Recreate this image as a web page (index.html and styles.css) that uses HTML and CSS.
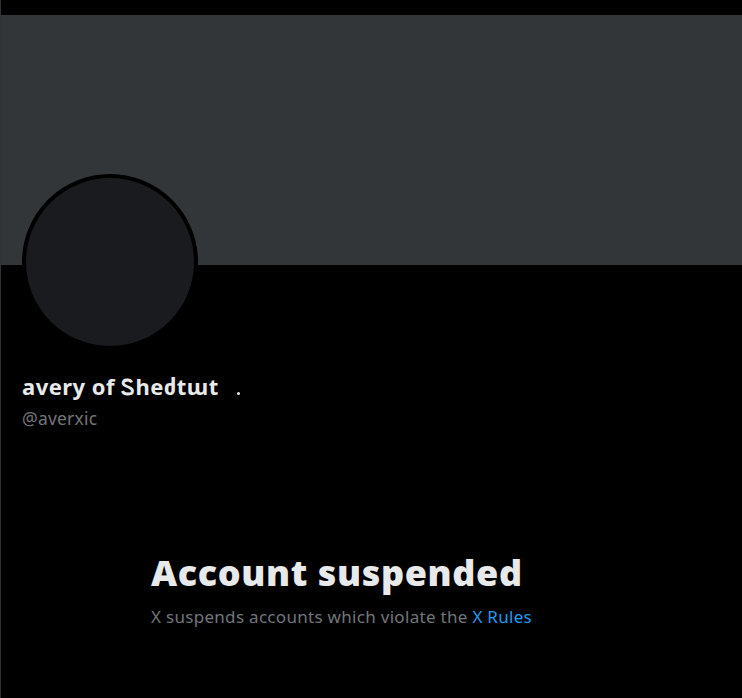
FILE: index.html
```html
<!DOCTYPE html>
<html lang="en">
<head>
<meta charset="utf-8">
<title>Account suspended</title>
<link rel="stylesheet" href="styles.css">
</head>
<body>
<main class="column">
  <div class="topbar"></div>
  <div class="banner"></div>
  <section class="profile">
    <div class="avatar"></div>
    <div class="name-row">
      <span class="name">avery of Ꮪheძtɯt</span>
      <span class="dot"></span>
    </div>
    <div class="handle">@averxic</div>
  </section>
  <section class="suspended">
    <h1 class="title">Account suspended</h1>
    <p class="message">X suspends accounts which violate the <a class="link" href="#">X Rules</a></p>
  </section>
</main>
</body>
</html>
```

FILE: styles.css
```css
html, body {
  margin: 0;
  padding: 0;
  background: #000;
  height: 100%;
}
body {
  font-family: "Noto Sans", "Open Sans", "DejaVu Sans", sans-serif;
  color: #e7e9ea;
}
.column {
  min-height: 100%;
  border-left: 1px solid #2f3336;
  box-sizing: border-box;
}
.topbar {
  height: 15px;
}
.banner {
  height: 250px;
  background: #333639;
}
.profile {
  padding-left: 21px;
}
.avatar {
  width: 168px;
  height: 168px;
  border: 4px solid #000;
  border-radius: 50%;
  background: #191b1e;
  margin-top: -91px;
}
.name-row {
  display: flex;
  align-items: center;
  margin-top: 23px;
  height: 26px;
}
.name {
  font-size: 22px;
  font-weight: 700;
  line-height: 26px;
  letter-spacing: 0.45px;
}
.dot {
  width: 3px;
  height: 3px;
  border-radius: 50%;
  background: #e7e9ea;
  margin-left: 18px;
  margin-top: 14px;
}
.handle {
  font-size: 17.5px;
  line-height: 22px;
  color: #71767b;
  margin-top: 8px;
  letter-spacing: 0.2px;
}
.suspended {
  margin-left: 150px;
  margin-top: 124px;
}
.title {
  margin: 0;
  font-size: 36px;
  font-weight: 900;
  line-height: 40px;
  letter-spacing: 0.6px;
}
.message {
  margin: 13px 0 0;
  font-size: 17px;
  line-height: 22px;
  color: #71767b;
  letter-spacing: 0.3px;
}
.link {
  color: #1d9bf0;
  text-decoration: none;
}
```
